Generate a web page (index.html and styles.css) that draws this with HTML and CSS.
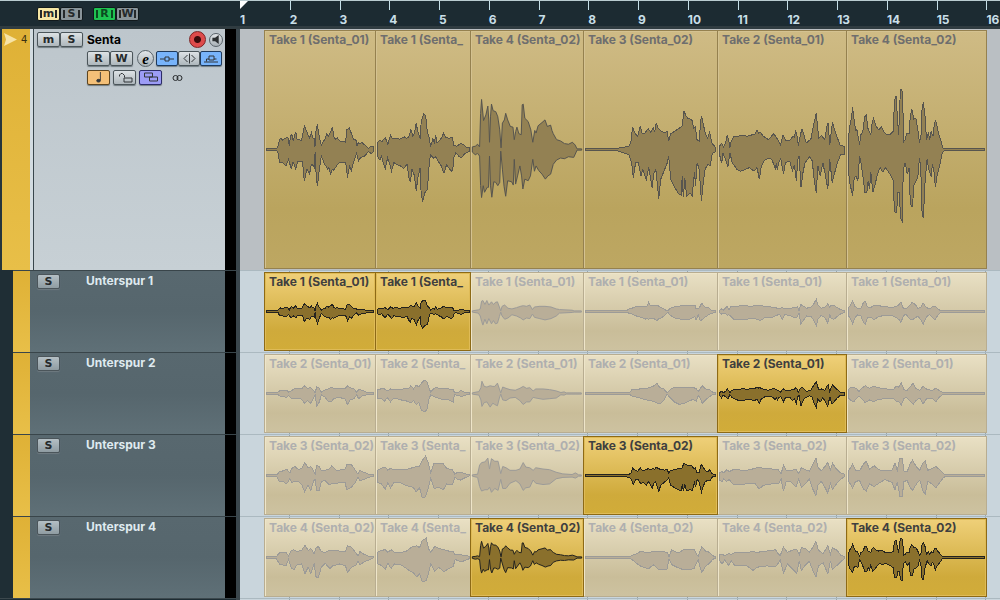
FILE: index.html
```html
<!DOCTYPE html>
<html lang="de">
<head>
<meta charset="utf-8">
<title>Senta</title>
<link rel="stylesheet" href="styles.css">
</head>
<body>
<main class="project">
  <header class="row row-ruler">
    <div class="global-tools">
      <button class="btn btn-global is-mute" type="button"><span class="bars">m</span></button>
      <button class="btn btn-global" type="button"><span class="bars">S</span></button>
      <button class="btn btn-global is-read" type="button"><span class="bars">R</span></button>
      <button class="btn btn-global" type="button"><span class="bars">W</span></button>
    </div>
    <div class="ruler" id="ruler">
      <svg class="playhead" viewBox="0 0 8 8" aria-hidden="true"><path d="M0 0H8L0 8Z"/></svg>
    </div>
  </header>

  <section class="row row-main">
    <div class="track">
      <div class="stripe">
        <svg class="fold" viewBox="0 0 13 13" aria-hidden="true"><path d="M0 0L13 6.500L0 13L2 6.500Z"/></svg>
        <span class="number">4</span>
      </div>
      <div class="panel">
        <div class="tools">
          <div class="pair">
            <button class="btn" type="button">m</button>
            <button class="btn" type="button">S</button>
          </div>
          <span class="name">Senta</span>
          <button class="round record" type="button" aria-label="Record"></button>
          <button class="round monitor" type="button" aria-label="Monitor"><svg viewBox="0 0 8 10"><path fill="#2b2f31" d="M0 3H3L7 0V10L3 7H0Z"/></svg></button>
        </div>
        <div class="tools tools-inset">
          <div class="pair">
            <button class="btn" type="button">R</button>
            <button class="btn" type="button">W</button>
          </div>
          <button class="round edit" type="button">e</button>
          <div class="pair trio">
            <button class="btn is-blue" type="button" aria-label="Inserts"><svg class="icon" viewBox="0 0 16 10"><path d="M1 5.500H6M10 5.500H15M6 3.500H10V7.500H6Z"/></svg></button>
            <button class="btn" type="button" aria-label="EQ"><svg class="icon" viewBox="0 0 16 10"><path d="M8.500 0V10M6.500 1.500L3 5L6.500 8.500M10.500 1.500L14 5L10.500 8.500"/></svg></button>
            <button class="btn is-blue" type="button" aria-label="Sends"><svg class="icon" viewBox="0 0 16 10"><path d="M1 8.500H15M3.500 8V5.500H6M11 5.500H13.500M6 2.500H11V6.500H6Z"/></svg></button>
          </div>
        </div>
        <div class="tools tools-inset tools-spaced">
          <button class="btn is-orange" type="button" aria-label="Timebase"><svg class="icon" viewBox="0 0 16 12"><path d="M9.500 0V9"/><ellipse cx="7.500" cy="9.500" rx="2" ry="1.500" fill="#33373a"/></svg></button>
          <button class="btn" type="button" aria-label="Lock"><svg class="icon" viewBox="0 0 16 10"><path d="M7 5.500H15V9.500H7ZM7.500 5V3L5.500 1H4L2.500 2.500V4"/></svg></button>
          <button class="btn is-violet" type="button" aria-label="Lanes"><svg class="icon" viewBox="0 0 16 10"><path d="M1.500 .5H9.500V4.500H1.500ZM6.500 4.500H14.500V8.500H6.500Z"/></svg></button>
          <svg class="link" viewBox="0 0 12 8" aria-hidden="true"><circle cx="3.500" cy="4" r="2.500"/><circle cx="7.500" cy="4" r="2.500"/></svg>
        </div>
      </div>
      <div class="meter"></div>
    </div>
    <div class="lane" data-lane="main"></div>
  </section>

  <section class="row row-sub">
    <div class="track"><div class="stripe"></div><div class="panel"><button class="btn" type="button">S</button><span class="name">Unterspur 1</span></div><div class="meter"></div></div>
    <div class="lane" data-lane="1"></div>
  </section>
  <section class="row row-sub">
    <div class="track"><div class="stripe"></div><div class="panel"><button class="btn" type="button">S</button><span class="name">Unterspur 2</span></div><div class="meter"></div></div>
    <div class="lane" data-lane="2"></div>
  </section>
  <section class="row row-sub">
    <div class="track"><div class="stripe"></div><div class="panel"><button class="btn" type="button">S</button><span class="name">Unterspur 3</span></div><div class="meter"></div></div>
    <div class="lane" data-lane="3"></div>
  </section>
  <section class="row row-sub">
    <div class="track"><div class="stripe"></div><div class="panel"><button class="btn" type="button">S</button><span class="name">Unterspur 4</span></div><div class="meter"></div></div>
    <div class="lane" data-lane="4"></div>
  </section>
  <div class="row row-end"><div class="track"></div><div class="lane"></div></div>
</main>
<script src="app.js"></script>
</body>
</html>
```
FILE: styles.css
```css
* { box-sizing: border-box; }

body {
  margin: 0;
  background: #1d2c33;
  font: bold 12px/14px Inter, "Liberation Sans", sans-serif;
}

button {
  margin: 0;
  padding: 0;
  font: inherit;
  color: inherit;
}

.project {
  display: flex;
  flex-direction: column;
  min-height: 100vh;
  overflow: hidden;
}

.row {
  display: grid;
  grid-template-columns: 240px minmax(0, 1fr);
}

.row-ruler {
  min-height: 29px;
  background: #1c2b32;
  border-top: 1px solid #b9cbd0;
  border-bottom: 3px solid #303c41;
}
.row-main { min-height: 241px; }
.row-sub { min-height: 82px; }
.row-end { flex: 1; }
.row-end .track { border-top: 1px solid #3c484d; }

/* Global buttons */
.global-tools {
  display: flex;
  align-items: flex-start;
  padding: 6px 0 0 37px;
}
.btn-global { color: #2d373b; }
.btn-global:nth-child(3) { margin-left: 10px; }
.btn.btn-global {
  height: 14px;
  background: #899499;
  border-color: #11191c;
}
.btn.is-mute { background: #f5e6a4; }
.btn.is-read { background: #1fc451; color: #0b4a20; }
.bars {
  display: inline-block;
  width: 17px;
  line-height: 8px;
  border: solid currentColor;
  border-width: 0 2px;
}

/* Ruler */
.ruler {
  position: relative;
  display: grid;
  grid-template-columns: repeat(15, minmax(0, 55fr)) minmax(0, 15fr);
  overflow: hidden;
}
.tick {
  height: 9px;
  border-left: 1px solid #c5dfe8;
}
.tick span {
  display: block;
  margin-left: -1px;
  padding-top: 12px;
  color: #c9dfe8;
}
.tick:nth-of-type(1) { border-left-color: transparent; }
.playhead {
  position: absolute;
  top: 0;
  left: 0;
  width: 8px;
  height: 8px;
  fill: #fff;
}

/* Track list */
.track {
  display: grid;
  grid-template-columns: 28px minmax(0, 1fr) 11px;
  padding-left: 2px;
  border-right: 4px solid #3a464c;
}
.stripe {
  display: flex;
  align-items: flex-start;
  gap: 4px;
  padding: 4px 2px;
  background: linear-gradient(#dfb136, #e8bf48);
}
.fold {
  width: 13px;
  height: 13px;
  fill: #f6e3a6;
}
.number {
  font: 10px/14px "DejaVu Sans", sans-serif;
  color: #3a3013;
}
.meter { background: #000; }

.panel {
  color: #000;
  background: linear-gradient(#bdc6cc, #c7d0d5);
}
.row-main .panel {
  display: flex;
  flex-direction: column;
  gap: 2px;
  margin-left: 3px;
  padding: 2px 2px 0 3px;
  border-left: 1px solid #39464c;
}
.row-main .track { background: linear-gradient(90deg, #26353b 2px, #d3dce1 2px); }

.row-sub .track {
  grid-template-columns: 17px minmax(0, 1fr) 11px;
  padding-left: 13px;
  background: #1f2e35;
}
.row-sub .stripe,
.row-sub .panel,
.row-sub .meter { border-top: 1px solid #39454a; }
.row-sub .panel {
  display: flex;
  align-items: flex-start;
  gap: 26px;
  padding: 3px 7px;
  color: #dfeaef;
  background: linear-gradient(#58686f, #56666d 50%, #5f7077);
}
.row-sub .btn { background: linear-gradient(#b4bfc4, #8f9ca2); }

/* Track controls */
.tools {
  display: flex;
  align-items: center;
  min-height: 17px;
}
.tools-inset { padding-left: 50px; }
.tools-spaced { gap: 3px; }
.tools .name { flex: 1; padding-left: 4px; }
.pair { display: flex; }
.trio { margin-left: 2px; }

.btn {
  display: flex;
  flex: none;
  align-items: center;
  justify-content: center;
  width: 23px;
  height: 15px;
  font: bold 11px/11px "DejaVu Sans", sans-serif;
  color: #25292b;
  background: linear-gradient(#dde2e5, #aeb7bc);
  border: 1px solid #4b555a;
  border-radius: 2px;
  box-shadow: 0 1px 1px #6f7a80;
}
.trio .btn { width: 22px; }
.btn.is-blue { background: #78b4fb; border-color: #1f3a5c; }
.btn.is-orange { background: #f4c078; border-color: #5d4520; }
.btn.is-violet { background: #9c9cf5; border-color: #2c2c68; }
.btn-global.btn-global { box-shadow: none; }

.icon {
  width: 16px;
  height: 11px;
  fill: none;
  stroke: #33373a;
}
.link {
  width: 12px;
  height: 8px;
  margin-left: 7px;
  fill: none;
  stroke: #26292b;
}

.round {
  display: flex;
  flex: none;
  align-items: center;
  justify-content: center;
  width: 14px;
  height: 14px;
  background: linear-gradient(#e2e6e9, #a8b1b6);
  border: 1px solid #59636a;
  border-radius: 50%;
}
.record {
  width: 17px;
  height: 17px;
  margin-right: 3px;
  background: radial-gradient(circle, #3a0b0b 3px, #de4b4b 4px);
  border-color: #7d2222;
}
.monitor svg { width: 8px; height: 9px; }
.edit {
  width: 17px;
  height: 17px;
  margin-left: 4px;
  font: italic bold 15px/12px "Liberation Serif", serif;
}

/* Event lanes */
.lane {
  display: grid;
  grid-template-columns:
    minmax(0, 24fr) minmax(0, 111fr) minmax(0, 95fr) minmax(0, 113fr)
    minmax(0, 134fr) minmax(0, 129fr) minmax(0, 141fr) minmax(0, 13fr);
  padding: 1px 0;
  border-top: 1px solid #abb9c0;
  background: repeating-linear-gradient(90deg, #c9d5dc 0 calc(6.547% - 1px), #98a6ac calc(6.547% - 1px) 6.547%);
}
.row-main .lane {
  border-top: 0;
  background: #babfc3;
}
.lane::before { content: ""; background: #c9d5dc; }
.lane::after { content: ""; background: #c9d5dc; }
.row-main .lane::before,
.row-main .lane::after { background: #babfc3; }

.clip {
  position: relative;
  display: grid;
  margin-right: -1px;
  overflow: hidden;
  color: #afafaf;
  background: linear-gradient(#e9e0c4, #c9bd99 75%, #cdc2a0);
  border: 1px solid #b8ad91;
  box-shadow: inset 1px 1px #eee5c9;
}
.clip:last-child { margin-right: 0; }
.clip h2 {
  grid-area: 1 / 1;
  margin: 0;
  padding: 2px 0 0 4px;
  font: inherit;
  white-space: nowrap;
}
.clip.is-active {
  z-index: 1;
  color: #3f3f3f;
  background: linear-gradient(#efd079, #cfaa3b 75%, #d1ac39);
  border-color: #8d6a16;
  box-shadow: inset 0 0 0 1px #dfbb57;
}
.row-main .clip {
  color: #6e6e6e;
  background: linear-gradient(#cfbb85, #baa45e 75%, #bda762);
  border-color: #95814f;
  box-shadow: inset 1px 1px #d4c291;
}

.wave {
  position: absolute;
  inset: 0;
  width: 100%;
  height: 100%;
  fill: #b9ae98;
  stroke: #9c9b98;
  shape-rendering: crispEdges;
}
.wave path { vector-effect: non-scaling-stroke; }
.is-active .wave { fill: #8a702c; stroke: #24231f; }
.row-main .wave { fill: #938153; stroke: #57554f; }
```
FILE: app.js
```js
// Start and width of each comp range, in thirds of a pixel.
const ranges = [[12, 336], [346, 285], [17, 339], [356, 402], [23, 387], [410, 420]];
const laneStart = [12, 346, 632, 11, 412, 800];

// Envelope of the comp: x/height pairs, upper edge then lower edge.
const comp = [
  ["Take 1 (Senta_01)",
   "18 1 48 1 52 12 57 30 60 34 66 28 72 34 82 37 86 12 90 40 94 46 98 28 102 40 106 54 110 30 124 28 130 62 133 70 138 58 143 46 148 35 154 52 158 35 163 32 164 10 166 12 168 60 172 76 176 50 180 30 184 12 190 25 196 32 200 48 205 40 212 52 218 68 222 40 228 30 232 36 240 26 250 25 258 22 262 60 270 65 276 48 282 32 290 28 293 12 297 20 302 18 308 22 314 15 320 12 328 4 336 10 342 8",
   "18 1 48 1 52 12 57 40 64 38 70 44 76 50 84 30 92 58 98 38 106 60 112 36 126 36 129 60 132 95 140 60 148 75 153 48 156 45 163 55 164 15 166 12 168 75 172 112 178 60 184 20 194 44 204 60 207 55 212 74 218 60 222 63 236 42 248 38 258 40 261 55 264 85 270 50 276 64 282 40 292 12 298 35 304 24 316 20 328 6 336 12 342 8"],
  ["Take 1 (Senta_",
   "351 20 356 28 364 24 374 36 382 16 390 44 396 32 410 34 418 31 432 38 440 34 446 40 452 60 458 40 463 52 468 80 472 58 480 32 483 85 488 100 491 108 494 106 498 90 502 50 508 36 511 10 514 15 518 32 523 22 527 45 531 20 540 28 546 38 551 50 556 38 566 34 578 36 582 12 590 10 604 18 612 14 618 8 628 6",
   "351 22 358 32 363 20 369 44 374 58 381 26 388 46 393 66 400 40 410 46 420 50 430 58 440 44 446 85 450 100 455 60 462 78 468 125 473 85 480 55 483 140 488 156 494 132 502 120 507 50 511 15 520 26 528 22 534 35 544 50 548 64 552 72 560 46 568 58 576 66 580 50 582 25 588 10 597 20 604 26 614 14 628 6"],
  ["Take 4 (Senta_02)",
   "21 8 30 10 37 16 43 8 46 110 49 152 52 120 55 88 62 105 68 132 71 90 73 22 76 100 79 138 84 118 92 115 98 100 104 60 108 5 112 80 118 90 122 110 128 90 136 70 144 68 148 30 152 54 156 68 162 48 169 45 172 136 175 138 180 95 190 85 198 60 204 22 210 58 214 50 220 72 232 82 241 90 248 70 258 74 262 58 266 48 276 30 288 26 300 18 312 16 324 22 332 14 338 1 352 1",
   "21 8 30 16 37 12 43 20 46 110 49 146 54 110 58 130 66 115 70 115 73 20 76 110 80 145 86 98 92 100 98 110 104 100 107 5 112 60 117 112 122 142 128 95 140 98 145 108 148 30 152 105 158 80 165 50 170 80 174 120 180 90 190 95 197 80 204 30 209 66 214 50 222 64 232 75 242 90 250 80 258 75 266 45 276 32 288 26 300 28 312 22 328 24 338 2 352 1"],
  ["Take 3 (Senta_02)",
   "360 1 440 1 455 3 470 6 492 10 498 25 503 68 510 50 518 40 526 72 532 48 540 50 550 64 558 52 565 66 570 55 574 80 580 65 590 55 600 50 607 55 612 25 618 48 630 55 640 62 652 70 655 90 658 118 664 102 670 95 682 90 688 65 693 70 697 30 704 25 709 92 712 100 718 70 724 45 730 35 736 52 742 20 752 8",
   "360 1 440 1 455 3 470 8 492 16 500 40 505 85 512 40 520 40 528 80 534 60 544 92 552 55 562 118 567 72 573 60 577 100 582 150 588 90 600 60 608 40 612 20 618 90 630 115 642 135 650 138 653 80 656 145 661 88 666 142 676 132 683 140 690 70 693 110 698 40 704 60 711 155 716 105 722 60 730 45 737 50 744 12 752 8"],
  ["Take 2 (Senta_01)",
   "27 10 34 18 40 8 46 20 51 45 56 25 59 5 62 22 70 38 84 40 98 44 110 40 124 44 134 46 141 60 146 50 150 54 160 40 176 30 186 42 192 48 204 30 212 14 220 44 228 28 240 28 250 40 254 36 258 58 263 35 266 10 272 45 277 62 284 40 290 20 304 32 312 75 320 110 325 60 328 35 336 42 346 30 352 70 356 80 361 15 366 60 369 82 376 58 384 35 392 14 404 10",
   "27 12 34 42 38 12 46 30 53 52 59 10 66 40 80 60 92 66 106 60 118 55 132 66 141 55 148 90 154 50 164 32 176 26 186 30 196 58 200 40 202 62 208 35 213 28 221 75 227 40 240 35 248 65 254 48 260 95 264 30 268 20 274 114 280 70 286 40 300 22 308 35 313 85 320 132 325 50 332 80 340 40 348 80 355 120 361 30 368 100 376 70 384 40 394 15 404 16"],
  ["Take 4 (Senta_02)",
   "414 30 418 70 424 100 427 128 432 85 436 58 440 60 448 15 452 45 458 55 463 98 468 105 474 60 482 45 486 80 490 95 498 70 506 60 514 68 524 50 532 44 540 45 550 55 553 140 556 160 559 160 562 100 566 45 570 150 573 182 576 180 578 150 582 25 586 30 590 50 598 48 601 100 606 122 612 92 618 95 624 60 629 20 634 45 637 130 641 140 646 100 650 30 656 52 660 30 664 55 670 40 674 80 678 88 686 52 694 25 700 5 706 1 825 1",
   "414 60 418 100 427 140 432 85 438 82 443 95 448 20 453 45 460 95 464 130 470 130 474 95 478 120 482 70 488 130 494 110 502 75 510 55 518 68 526 55 540 75 550 95 553 185 556 192 560 190 564 130 568 130 572 210 577 218 580 60 586 40 592 75 598 55 601 160 604 172 608 172 612 110 624 85 629 25 633 60 637 200 641 205 646 95 652 30 657 60 664 82 668 45 673 70 677 115 683 75 690 50 698 10 706 1 825 1"]
];

// Unused takes: x, height above, height below. null marks the range used in the comp.
const takes = {
  1: ["Take 1 (Senta_01)", [null, null,
    "636 2 2,654 5 5,660 8 14,664 32 30,668 34 42,674 22 24,680 34 38,686 20 22,694 30 38,700 22 28,706 28 38,712 30 36,718 14 16,722 2 2,726 16 14,734 20 24,744 10 20,756 8 10,770 12 14,782 16 20,790 18 26,800 16 20,810 20 22,818 6 8,824 14 18,840 16 22,856 16 26,874 14 22,890 8 14,900 6 5,938 4 3,944 1 1,966 1 1",
    "16 1 1,136 1 1,142 4 3,148 8 6,156 10 8,170 16 14,184 16 18,196 14 24,202 18 20,206 28 24,212 18 22,222 18 22,232 20 28,238 16 22,248 10 18,258 4 8,264 1 1,272 10 12,290 16 22,310 18 24,330 18 24,346 20 16,350 8 26,356 8 10,362 16 28,367 26 26,376 14 18,388 12 10,396 3 6,408 3 3",
    "417 3 4,422 8 8,428 4 6,436 12 8,440 16 12,445 6 10,450 14 14,460 16 24,490 18 26,515 16 20,530 20 24,540 20 28,552 16 20,570 14 20,585 12 14,598 8 8,606 12 24,614 8 10,630 10 12,645 12 20,652 14 16,657 3 4,662 22 38,668 18 30,680 10 14,694 14 16,702 24 28,709 38 44,714 20 24,724 10 12,736 14 20,744 24 36,750 12 10,754 20 20,762 20 24,772 12 16,782 6 8,794 3 3",
    "804 10 12,812 22 26,817 32 38,824 16 20,832 10 10,842 10 14,850 28 34,855 32 40,862 14 20,872 12 18,882 20 26,892 18 18,910 16 12,935 12 12,950 16 20,958 22 26,963 30 34,970 10 14,978 8 8,988 18 22,997 28 26,1006 22 20,1014 10 14,1022 12 24,1030 26 40,1040 12 16,1050 8 10,1058 14 18,1066 16 26,1074 8 12,1084 1 1,1215 1 1"]],
  2: ["Take 2 (Senta_01)", [
    "18 1 1,50 1 1,58 10 8,78 10 12,84 4 6,92 8 14,100 14 16,112 14 14,124 14 18,132 24 30,142 16 22,152 18 30,160 10 14,165 2 4,170 20 38,178 16 26,184 4 4,194 10 10,206 14 26,214 20 26,222 16 16,236 14 12,256 14 16,264 24 34,272 18 20,284 14 16,292 3 4,298 12 16,308 10 8,322 4 4,342 2 2",
    "351 12 14,360 14 14,372 14 24,380 8 12,390 14 26,400 12 14,416 12 18,430 14 22,444 14 24,452 24 30,460 14 22,468 26 34,476 20 28,484 32 52,492 40 56,500 38 52,506 18 18,512 4 4,520 14 8,528 20 12,540 14 16,552 14 20,566 14 20,580 12 26,584 3 4,596 4 6,604 10 10,614 4 6,628 2 2",
    "636 2 2,656 6 5,662 18 20,665 38 40,672 22 28,680 20 26,690 24 42,698 22 30,704 22 34,712 32 38,718 14 14,722 2 2,728 20 20,738 16 22,750 12 14,766 10 12,780 16 22,790 22 34,800 16 26,810 18 26,820 8 12,828 14 14,850 14 18,870 12 16,890 8 14,904 3 4,914 5 5,920 1 1,966 1 1",
    "16 1 1,148 1 2,156 12 8,180 14 14,200 16 20,220 22 24,232 32 30,240 18 32,252 14 22,262 2 2,272 12 14,284 20 26,300 20 34,320 20 28,340 18 18,350 16 24,356 6 6,362 14 14,368 24 30,378 14 20,390 12 10,400 4 4,408 3 3",
    null,
    "804 12 14,812 20 22,820 20 26,830 14 14,836 6 8,844 16 16,855 24 28,868 16 20,880 22 26,894 18 18,920 14 16,940 12 14,948 22 24,956 20 24,964 32 36,972 12 16,980 8 12,990 20 22,1000 32 34,1008 16 22,1020 10 14,1030 22 32,1042 12 14,1058 10 14,1068 16 26,1078 10 12,1090 3 3,1098 1 1,1215 1 1"]],
  3: ["Take 3 (Senta_02)", [
    "18 1 1,48 1 1,56 12 20,66 14 18,78 20 26,88 8 10,94 22 22,104 28 18,114 18 18,124 22 28,133 40 50,144 24 30,152 28 46,160 16 18,165 4 12,170 30 46,178 28 46,184 16 18,196 16 16,208 20 28,216 30 26,230 16 24,256 18 20,262 34 44,276 34 36,288 16 22,296 4 5,302 16 16,314 10 12,328 4 6,342 2 2",
    "351 16 22,362 22 26,374 26 42,382 16 22,390 22 38,400 18 22,420 18 22,436 18 30,448 22 34,458 24 36,468 28 50,478 28 38,486 46 68,496 60 66,504 40 40,512 8 8,522 38 40,536 36 36,550 36 44,560 22 26,578 18 28,585 4 6,594 10 12,602 10 14,614 6 8,628 2 2",
    "636 2 2,652 4 6,658 32 34,664 40 48,674 42 44,683 54 44,688 20 36,694 52 52,704 44 40,714 44 46,722 6 12,728 28 40,738 24 40,750 16 24,768 16 16,780 20 26,790 40 46,798 26 38,810 24 36,820 16 14,828 24 24,850 20 28,870 18 26,890 10 10,910 5 6,938 3 5,948 8 8,958 2 2,966 1 1",
    null,
    "417 10 14,424 12 20,430 8 10,438 18 18,446 12 12,458 18 28,500 16 26,524 22 24,536 26 42,550 22 30,575 20 26,594 18 26,603 6 12,610 32 48,618 16 20,632 14 20,648 20 36,656 6 12,664 24 36,676 18 26,688 14 10,696 28 36,708 54 62,714 26 30,724 14 18,734 26 34,744 40 54,752 18 24,758 38 42,770 20 26,782 8 12,794 4 4",
    "804 12 16,817 36 38,826 16 18,838 14 16,850 36 42,858 44 48,868 20 26,882 30 34,896 18 24,915 14 12,936 16 22,945 38 44,952 16 20,960 54 64,967 54 64,972 14 18,982 12 16,990 34 36,998 48 46,1010 26 26,1020 16 14,1028 36 44,1036 46 58,1044 16 18,1054 20 24,1068 28 38,1080 18 22,1092 5 6,1100 1 1,1215 1 1"]],
  4: ["Take 4 (Senta_02)", [
    "18 1 1,46 1 2,56 14 20,76 16 26,84 5 6,92 20 32,100 24 38,110 18 22,124 22 20,134 38 50,144 22 30,152 28 50,162 12 18,168 30 60,175 34 62,184 18 30,196 16 18,210 22 34,218 22 26,240 20 20,258 20 26,264 36 46,276 32 30,290 14 24,296 4 10,302 18 22,314 10 14,328 4 8,342 2 2",
    "351 16 20,362 22 24,374 24 36,382 16 18,392 24 34,402 16 20,420 16 22,436 18 32,446 26 40,458 34 46,470 36 60,478 30 50,486 52 74,498 60 72,506 26 46,512 16 20,524 34 42,536 28 30,552 24 44,566 20 34,580 18 28,586 8 6,604 8 14,628 4 4",
    null,
    "16 1 1,144 1 1,156 6 6,170 12 18,184 20 28,196 16 32,208 16 34,220 18 22,238 20 38,262 16 36,268 3 6,276 24 22,296 14 32,312 24 38,330 26 38,344 26 34,350 12 18,356 4 6,362 20 32,367 34 46,378 20 28,390 16 18,400 6 6,408 2 2",
    "417 8 10,424 10 20,432 6 8,444 12 24,452 10 10,464 16 26,500 16 26,518 18 40,530 16 30,560 20 26,586 24 28,594 12 18,600 6 8,610 32 48,622 16 20,640 24 38,650 26 50,658 8 10,664 30 40,676 28 24,688 16 12,698 30 38,708 50 60,716 22 26,730 12 16,744 36 50,752 10 10,758 30 38,772 22 24,784 6 12,794 4 4",
    null]]
};

const pairs = (text) => {
  const n = text.split(" ").map(Number);
  return n.filter((_, i) => i % 2 === 0).map((x, i) => [x, n[i * 2 + 1]]);
};

// Silence keeps a floor, so that it draws as a solid line.
const FLOOR = 2;

function outline(top, bottom, scale) {
  const upper = top.map(([x, y]) => `${x} ${-Math.max(y * scale, FLOOR)}`);
  const lower = bottom.map(([x, y]) => `${x} ${Math.max(y * scale, FLOOR)}`).reverse();
  return `M${upper.concat(lower).join("L")}Z`;
}

function addClip(lane, name, active, start, width, half, path) {
  const clip = document.createElement("article");
  clip.className = active ? "clip is-active" : "clip";
  clip.innerHTML =
    `<svg class="wave" viewBox="${start} ${-half} ${width} ${half * 2}" preserveAspectRatio="none" aria-hidden="true"><path d="${path}"/></svg><h2>${name}</h2>`;
  lane.append(clip);
}

document.querySelectorAll("[data-lane]").forEach((lane) => {
  const id = lane.dataset.lane;
  ranges.forEach(([start, width], i) => {
    const [compName, top, bottom] = comp[i];
    if (id === "main") {
      addClip(lane, compName, false, start, width, 360, outline(pairs(top), pairs(bottom), 1));
      return;
    }
    const [fullName, shapes] = takes[id];
    // The second range is too narrow for the take's whole name.
    const name = i === 1 ? fullName.slice(0, 14) : fullName;
    if (shapes[i] === null) {
      addClip(lane, name, true, start, width, 119, outline(pairs(top), pairs(bottom), 0.33));
      return;
    }
    const points = shapes[i].split(",").map((p) => p.split(" ").map(Number));
    const path = outline(points.map((p) => [p[0], p[1]]), points.map((p) => [p[0], p[2]]), 1);
    addClip(lane, name, false, laneStart[i], width, 119, path);
  });
});

const ruler = document.getElementById("ruler");
for (let bar = 1; bar <= 16; bar += 1) {
  const tick = document.createElement("div");
  tick.className = "tick";
  tick.innerHTML = `<span>${bar}</span>`;
  ruler.append(tick);
}
```
